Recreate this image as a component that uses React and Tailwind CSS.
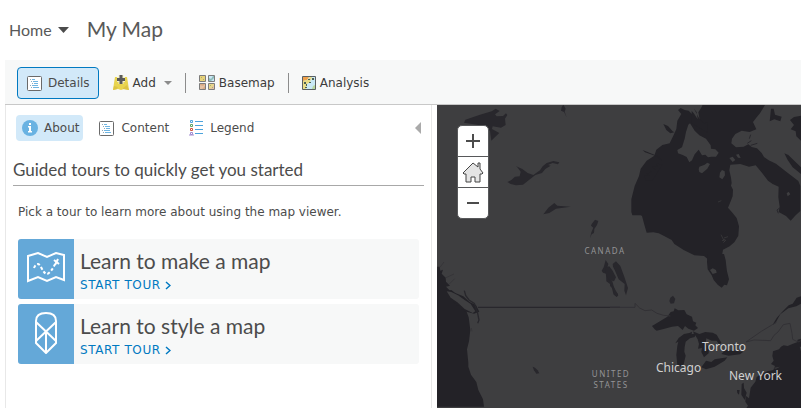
import React from 'react';

function ListIcon() {
  return (
    <svg className="h-[15px] w-[15px] shrink-0" viewBox="0 0 15 15" fill="none" aria-hidden="true">
      <rect x="0.5" y="0.5" width="14" height="14" rx="1" fill="#fff" stroke="#6a6a6a" />
      <path d="M5 3.500h3M6 5.500h5M7 7.500h4M5 9.500h6M6 11.500h6" stroke="#6fb5e2" />
      <path d="M3 3.500h1M4 5.500h1M5 7.500h1M3 9.500h1M4 11.500h1" stroke="#8fa9bb" />
    </svg>
  );
}

function AddIcon() {
  return (
    <svg className="h-4 w-4 shrink-0" viewBox="0 0 16 16" aria-hidden="true">
      <path d="M2 2h12l1 6 1 7-5-1-3 1-3-1-5 1 1-7z" fill="#e8d44f" />
      <path d="M0 15l1-4 4 1-1 2zM16 15l-2-5-4 3v1z" fill="#dcc344" />
      <path d="M8 0v9M4 4.500h8" stroke="#f4efc8" strokeWidth="5" />
      <path d="M8 0v9M4 4.500h8" stroke="#5a5a5a" strokeWidth="3" />
    </svg>
  );
}

function BasemapIcon() {
  return (
    <svg className="h-4 w-4 shrink-0" viewBox="0 0 16 16" aria-hidden="true">
      <g stroke="#7c7c7c">
        <path d="M.5.5h6v6h-6z" fill="#e8d27a" />
        <path d="M9.500.5h6v6h-6z" fill="#c8e6f5" />
        <path d="M.5 8.500h6v6h-6z" fill="#d9aa84" />
        <path d="M9.500 8.500h6v6h-6z" fill="#e8d68a" />
      </g>
      <path d="M10 6V3l2 1 2-3h1v2l-3 3z" fill="#8ebcb8" />
      <path d="M1 10l3 1 2-2v2l-3 3H1zM11 14l4-4v4z" fill="#e5c2a4" />
      <path d="M2 2h1v1H2zM4 4h1v1H4zM11 10h1v1h-1zM13 12h1v1h-1z" fill="#a8b070" />
    </svg>
  );
}

function AnalysisIcon() {
  return (
    <svg className="h-[14px] w-[14px] shrink-0" viewBox="0 0 14 14" aria-hidden="true">
      <path d="M.5.5h13v13H.5z" fill="#c9e8f6" />
      <path d="M1 1h6L5 4 1 5z" fill="#efa04b" />
      <path d="M1 5l4-1 3-3h2L8 6l-3 2-1 5H1z" fill="#e8dc86" />
      <path d="M10 13l1-3 2-1v4z" fill="#b8d6a0" />
      <path d="M2 6h2v2H2zM6 3h2v1H6zM4 8h1v2H4zM10 2h2v2h-2zM7 6h2v1H7zM3 11h2v1H3z" fill="#4f604f" />
      <path d="M.5.5h13v13H.5z" fill="none" stroke="#5a5f62" />
    </svg>
  );
}

function InfoIcon() {
  return (
    <svg className="h-4 w-4 shrink-0" viewBox="0 0 16 16" aria-hidden="true">
      <circle cx="8" cy="8" r="8" fill="#69b2e2" />
      <path d="M7 3h2v2H7zM6 6h3v5h1v1.500H6V11h1V7.500H6z" fill="#fff" />
    </svg>
  );
}

function LegendIcon() {
  return (
    <svg className="h-4 w-[14px] shrink-0" viewBox="0 0 14 16" fill="none" aria-hidden="true">
      <path d="M6 1.500h8M6 5.500h8M6 9.500h8M6 13.500h8" stroke="#4ba3dc" />
      <path d="M1.500.5h2v2h-2z" stroke="#4ba3dc" />
      <path d="M1.500 4.500h2v2h-2z" stroke="#5fa463" />
      <path d="M1.500 8.500h2v2h-2z" stroke="#d0553c" />
      <path d="M1.500 12.500h2v2h-2zM0 15h5" stroke="#a18bd0" />
    </svg>
  );
}

function TreasureMapIcon() {
  return (
    <svg className="h-[31px] w-[38px]" viewBox="0 0 38 31" fill="none" stroke="#fff" aria-hidden="true">
      <path d="M1 4l10-3 9 4 9-4 8 2v25l-8-3-9 4-9-4-10 4z" strokeWidth="2" />
      <path d="M7 16c2-5 5-5 7-1s4 7 6 7 6-5 8-10" strokeWidth="2" strokeDasharray="3 2" />
      <path d="M27 8l5 4M31 7l-3 6" strokeWidth="2" />
    </svg>
  );
}

function PencilIcon() {
  return (
    <svg className="h-[42px] w-6" viewBox="0 0 24 42" fill="none" stroke="#fff" aria-hidden="true">
      <path d="M2 9c0-5 3-8 10-8s10 3 10 8v22L12 41 2 31zM2 29l20-19M2 10l20 19M12 20v20" strokeWidth="2" />
    </svg>
  );
}

function HomeIcon() {
  return (
    <svg className="h-[21px] w-[22px]" viewBox="0 0 22 21" aria-hidden="true">
      <path
        d="M11 1L1 11l1 1h2v8h5v-5h4v5h5v-8h2l1-1-3-4V1h-2v4z"
        fill="#e4e4e4"
        stroke="#444"
      />
    </svg>
  );
}

function ToolButton({ icon, label, active, children }) {
  return (
    <button
      type="button"
      className={
        active
          ? 'flex h-8 items-center gap-[6px] rounded border border-[#0079c1] bg-[#d2e9f9] pr-2 pl-[9px] text-[#4c4c4c]'
          : 'flex h-8 items-center gap-1'
      }
    >
      {icon}
      <span>{label}</span>
      {children}
    </button>
  );
}

function PanelTab({ icon, label, active }) {
  return (
    <button
      type="button"
      className={
        active
          ? 'flex h-[26px] items-center gap-[6px] rounded bg-[#d2e9f9] pr-1 pl-[6px]'
          : 'flex h-[26px] items-center gap-[7px]'
      }
    >
      {icon}
      <span>{label}</span>
    </button>
  );
}

function TourCard({ icon, title }) {
  return (
    <a href="#tour" className="flex h-[60px] overflow-hidden rounded-[3px] bg-[#f7f8f8]">
      <span className="flex w-14 shrink-0 items-center justify-center bg-[#64a8d8] pb-[3px]">{icon}</span>
      <span className="flex flex-col pt-2 pl-[6px]">
        <span className="font-['Lato',sans-serif] text-[21px] leading-7 text-[#4c4c4c]">{title}</span>
        <span className="flex items-center gap-1 text-[12px] leading-5 tracking-wider text-[#0079c1]">
          START TOUR
          <svg className="h-[9px] w-[6px]" viewBox="0 0 6 9" fill="none" aria-hidden="true">
            <path d="M1 1l4 3.500L1 8" stroke="#0079c1" strokeWidth="1.500" />
          </svg>
        </span>
      </span>
    </a>
  );
}

function MapCanvas() {
  return (
    <svg
      className="absolute inset-0 h-full w-full"
      viewBox="437 105 364 303"
      preserveAspectRatio="xMinYMin slice"
      role="img"
      aria-label="Map of North America"
    >
      <path d="M437 105h364v303H437z" fill="#3e3e40" />
      <g fill="#28272c">
        <g transform="translate(430 100) scale(0.33333)">
          <path d="M102 68l4-9 44-15 35-10 12-8 12 7-14 10 5 6 19-1 9-8 4 5-7 11 2 19-14 8-25-4-2 8 22 12-15 14-9 9-4-30-30-16z" />
          <path d="M257 198l20 9 16 12 17 6 20-14 8-12 12-10 20-6 18 4-4 6-16-4-14 6 8 2-16 10-10 12-20 6-19 15-18 14-21 2-16-4-10-6 12-6 11-10 14-1 3-14-10-13z" />
          <path d="M340 343l15-20 18-14 9 8 40 3-44 6-20 13zM395 22l5-8 7 12-3 9 6 17-8-16-9-4zM485 372l10-13 10 4-4 12-8 12-1 12-7 4-5 12 4-18 6-14-7-6z" />
        </g>
        <g transform="translate(430 254) scale(0.33333)">
          <path d="M308 338l7 3 8 8 5 9-9 1-7-10z" />
          <path d="M515 50l6-10 6-22 8 12-5 18 5 22 12 12 8 28 9 10-3 8-10-6-8-30-14-10-1-23-9-3z" />
        </g>
        <g transform="translate(610 254) scale(0.33333)">
          <path d="M8 30l10-8 13 14 12 32 11 34-6 22-5-14 1-20-18-14-12-28-5-10zM0 88l12 12 13 24-6 5-8-11-2-14-9-8z" />
          <path d="M8 50l10 20-6 12-14-4-10-14-2-24 12-3z" />
          <path d="M181 131l8-6 7 10-4 13-10 1-4-8z" />
        </g>
      </g>
      <g fill="#232227">
        <g transform="translate(610 100) scale(0.33333)">
          <path d="M310 15h155l-15 25-10 12-11 14 10 22-20 8-24-4-19 10-10 14-2 14 14 12 23-2 14-7 10 8 16 4 14 14 7 12 14 10 22 10 25 20 42 32 6 15v75l-14 13-15 16-14-14-22-12 3-16-4-28 1-32-18-8-14-10-17-22-20-24-20 4-26-8-30 2-3 17 5 22 2 16-2 8 6 12-1 20-8 20-6 14 12 14 14 17 7 25-2 28-12 20-14 12-20 10-5 30-40-1-12-10-29-2-32-16-28-18-8-12-27-14-12-6-16-3-20 1-7-24-7-26-4-2-25 0-3-10v-38l10-40 13-30 5-22 18-24 23-15 6-18 18-14 22-5 12-25 8-18 3-25 12-20-10-12 8-6 12 6 12 2 15 15 12 17 6-5-4-22 10-16 6-14 12-18 10 0 6-5z" />
          <path d="M160 72l14 6 14 16 5 3-12 3-12-10zM98 150l20 8 30 12 7 12-18-14-32-11zM483 26l8 0 4 18 20 6-4 14-18-6-14 6 2-18zM540 60l12-9 21-4v75l-14-13-2-15-15-6 10-13zM523 160l12 5 38 37v20l-25-20-15-22z" />
          <path d="M104 228l14-2-8-6 16-2-6-8 16 0-10-10 16-1-4-8 20 2-30 48-22 0z" />
          <path d="M245 32l8 10 10 16-3-22-8-10 15 28 16 18 8-6 2 32-18-10-30-18z" />
        </g>
        <g transform="translate(610 254) scale(0.33333)">
          <path d="M292 0h50l5 18 2 18 2 16 6 24-6 18-8-2-8 9-12-9-12-14-6-14-12-18-2-22z" />
          <path d="M126 216l20-12 26-16 10-14 9-2 3-9 11 6 18-1 7 13 16 7 3 14 10 4-3 8 8 8-12 8-17-6-10-8-7 12-14-12-18 2-28 8-18 4-6-4z" />
          <path d="M196 268l10-16 16-12 16-3 8-4-1 8 13-4-4 12-14 4-13 10-3 16-1 14 4 12-6 26-8 8-11-6-3-30 3-28 3-12z" />
          <path d="M248 232l20 8 18-6 22 2 12 6 14 24-6 6-8-12-15 0-16-7-2 13 10 16-1 16-14 12-8-16 2-12-12 2 3-14-4-14-6-10z" />
          <path d="M274 340l14-20 16 4 10-8 38-6-8 10-30 18-26 8zM334 300l12-12 34 3 20 2-10 8-34 4z" />
          <path d="M488 212l12-20 16-18 20-20 12-5 12-18 13-4v22l-14 8-24 6-14 10-10 8-16 28z" />
          <path d="M573 254l-10 3-2 8-14 5-14 6-12-2-8 4-6 8-18 6-2 14 4 14-8 10 12 6-5 12-18 4-18 8-14 9-4 14-14 18-5 32-10-8-1 18 8 12-8 12v6h176z" />
          <path d="M395 390l6-4 1 16 8 14-6 22-10-16zM381 408l8 0-2 14-5-5z" />
        </g>
        <g transform="translate(430 254) scale(0.33333)">
          <path d="M21 38l8 0 2 12 8-3-4 12 12 12 1 12 12 12-12 3 16 16 20 14 22 22 2 18 8 22 5 38-4 34-6 24 4 40 0 12 8 24 16 22 6 24 14 28 3 22H21z" />
          <path d="M48 110l16-2 12 9 24 10 20 18 18 8 10 20-16 6-28-7-30-24z" />
        </g>
      </g>
      <g fill="#3e3e40">
        <g transform="translate(610 100) scale(0.33333)">
          <path d="M235 74l5-4 14 22 14 14 20 10 14 20 1 10 13 2 10 10-8 12-14 0-10 2-8-8-10 2-10-17-12 14-8 18-8 6-8-16-12-6-14-5-2-10 14-8 8-26 4-20z" />
          <path d="M268 200l16-6 8-6 8 4-8 14-16 14-8-4-2-8zM330 218l6-8 8 4 1 12-8 12-9-6zM358 174l10-4 8 10-8 6zM378 164l8-2 6 12-8-1zM530 280l6-5 5 8-8 6z" />
        </g>
        <g transform="translate(610 254) scale(0.33333)">
          <path d="M300 48l8-5 10 5 2 8-12 4zM490 342l20-4-12 6zM569 278h4v14z" />
        </g>
        <g transform="translate(430 254) scale(0.33333)">
          <path d="M50 112l14 2 20 10 20 14 18 12 14 22-8 5-24-12-22-20-20-14z" />
        </g>
      </g>
      <g fill="none" stroke="#28272c">
        <g transform="translate(430 254) scale(0.33333)" strokeWidth="4">
          <path d="M103 110l4 14 10 14 16 10 10 30 4 20-4 10M144 160h426" />
          <path d="M30 40l12-16M46 72l26-12M58 90l16-16M126 232l-2-10" strokeWidth="2" stroke="#323135" />
        </g>
        <g transform="translate(610 254) scale(0.33333)" strokeWidth="3" stroke="#323135">
          <path d="M0 160h75v-12l14 14 16 8 20-2 16 10 20 6 20 2M408 264l24-6 50 2 10-16 12-10 16-22 20-4 6 30 2 18 16 8 9-4M408 264l46-32 30-18 16-10" />
        </g>
        <g transform="translate(610 100) scale(0.33333)" strokeWidth="3">
          <path d="M412 130l12-8M422 136l20-6M418 116l4-12M505 340l-4-10 8-6" />
          <path d="M333 404l10 20M342 414l12-4M336 422l10-4M348 420l-8 8M324 306l10-4" stroke="#3e3e40" strokeWidth="2" />
        </g>
      </g>
      <g className="font-['Noto_Sans',sans-serif]">
        <g fill="#949496" fontSize="8" letterSpacing="1.5" textAnchor="middle">
          <text x="605" y="254">CANADA</text>
          <text x="611" y="377">UNITED</text>
          <text x="611" y="388">STATES</text>
        </g>
        <g fill="#d0d0d0" fontSize="12">
          <text x="702" y="351">Toronto</text>
          <text x="656" y="372">Chicago</text>
          <text x="729" y="380">New York</text>
        </g>
      </g>
    </svg>
  );
}

export default function App() {
  return (
    <div className="flex min-h-screen flex-col bg-white font-['DejaVu_Sans','Noto_Sans',sans-serif] text-[12px] text-[#4c4c4c]">
      <header className="flex h-[60px] items-center gap-[18px] px-[9px] font-['Lato',sans-serif] text-[#595959]">
        <button type="button" className="flex items-center gap-[6px] text-[16px] leading-5">
          Home
          <svg className="h-[6px] w-[11px]" viewBox="0 0 11 6" aria-hidden="true">
            <path d="M0 0h11L5.500 6z" fill="#4c4c4c" />
          </svg>
        </button>
        <h1 className="pb-[2px] text-[21px] leading-6">My Map</h1>
      </header>

      <div className="flex flex-1 flex-col pl-[5px]">
        <nav className="flex h-[45px] items-center border-b border-[#c8c8c8] bg-[#f7f8f8] pt-[2px] pl-3 text-[#3c3c3c]">
          <ToolButton icon={<ListIcon />} label="Details" active />
          <div className="ml-[14px] flex items-center">
            <ToolButton icon={<AddIcon />} label="Add">
              <svg className="ml-1 h-1 w-2" viewBox="0 0 8 4" aria-hidden="true">
                <path d="M0 0h8L4 4z" fill="#8c8c8c" />
              </svg>
            </ToolButton>
          </div>
          <span className="mx-[13px] h-5 w-px bg-[#8c8c8c]" />
          <ToolButton icon={<BasemapIcon />} label="Basemap" />
          <span className="mx-[13px] h-5 w-px bg-[#8c8c8c]" />
          <ToolButton icon={<AnalysisIcon />} label="Analysis" />
        </nav>

        <div className="flex flex-1">
          <aside className="mr-[5px] w-[427px] shrink-0 border-x border-[#e8e8e8] pr-[7px] pl-[7px]">
            <div className="flex items-center gap-4 pt-[10px] pl-[3px]">
              <PanelTab icon={<InfoIcon />} label="About" active />
              <PanelTab icon={<ListIcon />} label="Content" />
              <span className="ml-1 flex">
                <PanelTab icon={<LegendIcon />} label="Legend" />
              </span>
              <button type="button" aria-label="Collapse panel" className="mr-[3px] ml-auto">
                <svg className="h-3 w-[6px]" viewBox="0 0 6 12" aria-hidden="true">
                  <path d="M6 0v12L0 6z" fill="#aaa" />
                </svg>
              </button>
            </div>
            <h2 className="mt-[17px] border-b border-[#a8a8a8] pb-1 font-['Lato',sans-serif] text-[17px] leading-[23px]">
              Guided tours to quickly get you started
            </h2>
            <div className="pr-[5px] pl-[5px]">
              <p className="pt-4 text-[12px] leading-5">Pick a tour to learn more about using the map viewer.</p>
              <div className="mt-[17px] flex flex-col gap-[5px]">
                <TourCard icon={<TreasureMapIcon />} title="Learn to make a map" />
                <TourCard icon={<PencilIcon />} title="Learn to style a map" />
              </div>
            </div>
          </aside>

          <main className="relative flex-1 overflow-hidden bg-[#3e3e40]">
            <MapCanvas />
            <div className="absolute top-5 left-5 flex w-8 flex-col divide-y divide-[#57585a] overflow-hidden rounded-[5px] border border-[#57585a] bg-white">
              <button type="button" aria-label="Zoom in" className="flex h-[31px] items-center justify-center">
                <svg className="h-[14px] w-[14px]" viewBox="0 0 14 14" aria-hidden="true">
                  <path d="M7 0v14M0 7h14" stroke="#4c4c4c" strokeWidth="2" />
                </svg>
              </button>
              <button type="button" aria-label="Default extent" className="flex h-[31px] items-center justify-center">
                <HomeIcon />
              </button>
              <button type="button" aria-label="Zoom out" className="flex h-[30px] items-center justify-center">
                <svg className="h-[2px] w-3" viewBox="0 0 12 2" aria-hidden="true">
                  <path d="M0 1h12" stroke="#4c4c4c" strokeWidth="2" />
                </svg>
              </button>
            </div>
          </main>
        </div>
      </div>
    </div>
  );
}
